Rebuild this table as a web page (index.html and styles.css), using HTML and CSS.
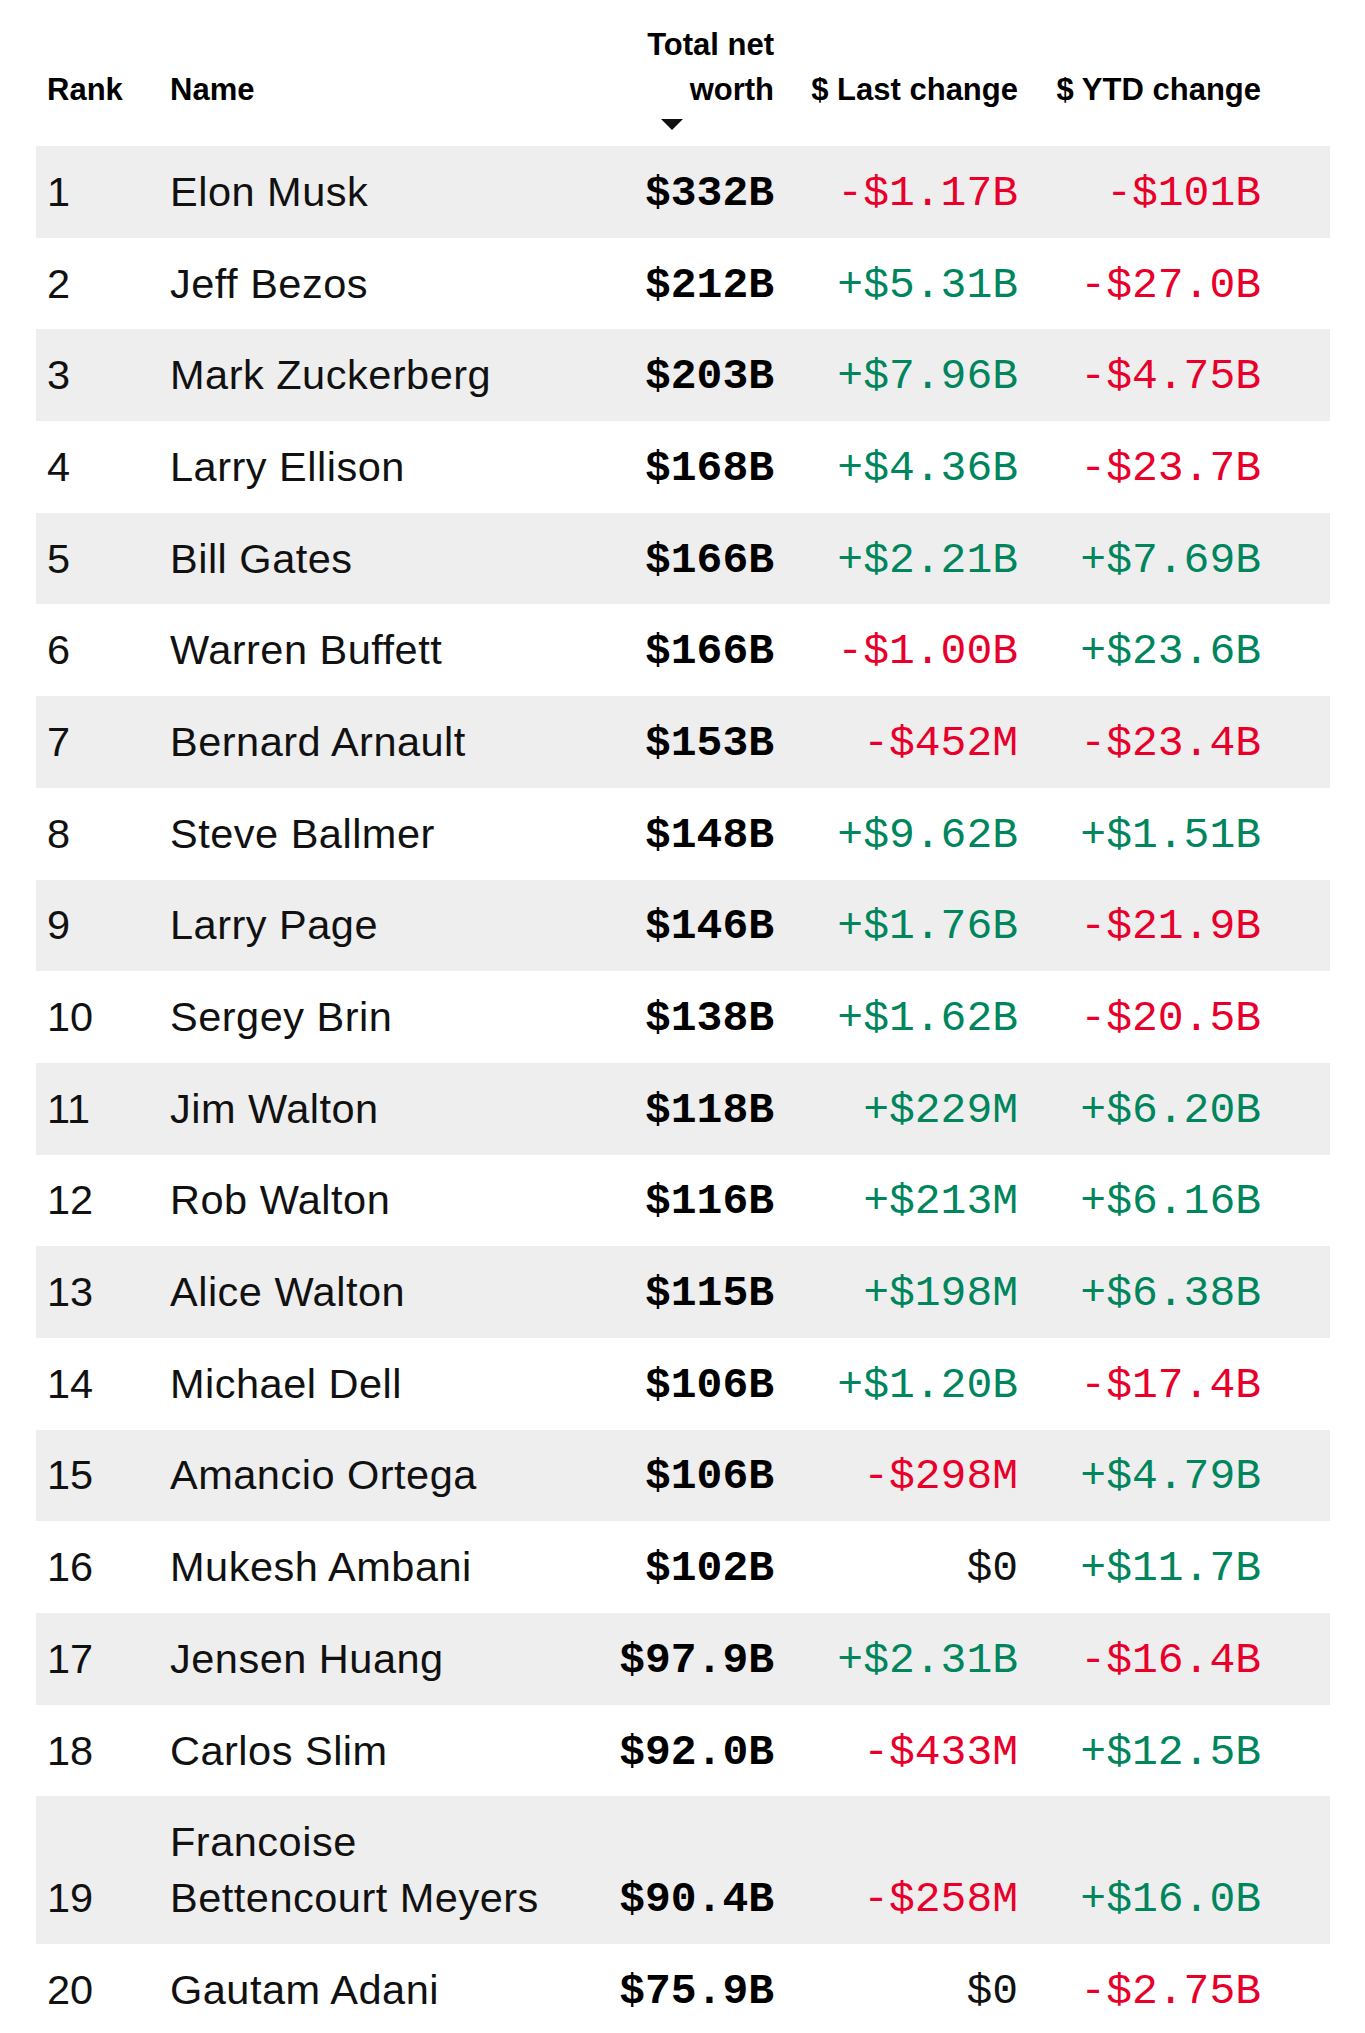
FILE: index.html
```html
<!DOCTYPE html>
<html lang="en">
<head>
<meta charset="utf-8">
<title>Billionaires</title>
<link rel="stylesheet" href="styles.css">
</head>
<body>
<div class="page">
<table class="board">
  <colgroup>
    <col class="c-rank"><col class="c-name"><col class="c-worth"><col class="c-last"><col class="c-ytd"><col class="c-fill">
  </colgroup>
  <thead>
    <tr>
      <th class="rank">Rank</th>
      <th class="name">Name</th>
      <th class="num worth-h">Total net worth<span class="sort-arrow"></span></th>
      <th class="num">$ Last change</th>
      <th class="num">$ YTD change</th>
      <th></th>
    </tr>
  </thead>
  <tbody>
    <tr><td class="rank">1</td><td class="name">Elon Musk</td><td class="worth">$332B</td><td class="chg neg">-$1.17B</td><td class="chg neg">-$101B</td><td></td></tr>
    <tr><td class="rank">2</td><td class="name">Jeff Bezos</td><td class="worth">$212B</td><td class="chg pos">+$5.31B</td><td class="chg neg">-$27.0B</td><td></td></tr>
    <tr><td class="rank">3</td><td class="name">Mark Zuckerberg</td><td class="worth">$203B</td><td class="chg pos">+$7.96B</td><td class="chg neg">-$4.75B</td><td></td></tr>
    <tr><td class="rank">4</td><td class="name">Larry Ellison</td><td class="worth">$168B</td><td class="chg pos">+$4.36B</td><td class="chg neg">-$23.7B</td><td></td></tr>
    <tr><td class="rank">5</td><td class="name">Bill Gates</td><td class="worth">$166B</td><td class="chg pos">+$2.21B</td><td class="chg pos">+$7.69B</td><td></td></tr>
    <tr><td class="rank">6</td><td class="name">Warren Buffett</td><td class="worth">$166B</td><td class="chg neg">-$1.00B</td><td class="chg pos">+$23.6B</td><td></td></tr>
    <tr><td class="rank">7</td><td class="name">Bernard Arnault</td><td class="worth">$153B</td><td class="chg neg">-$452M</td><td class="chg neg">-$23.4B</td><td></td></tr>
    <tr><td class="rank">8</td><td class="name">Steve Ballmer</td><td class="worth">$148B</td><td class="chg pos">+$9.62B</td><td class="chg pos">+$1.51B</td><td></td></tr>
    <tr><td class="rank">9</td><td class="name">Larry Page</td><td class="worth">$146B</td><td class="chg pos">+$1.76B</td><td class="chg neg">-$21.9B</td><td></td></tr>
    <tr><td class="rank">10</td><td class="name">Sergey Brin</td><td class="worth">$138B</td><td class="chg pos">+$1.62B</td><td class="chg neg">-$20.5B</td><td></td></tr>
    <tr><td class="rank">11</td><td class="name">Jim Walton</td><td class="worth">$118B</td><td class="chg pos">+$229M</td><td class="chg pos">+$6.20B</td><td></td></tr>
    <tr><td class="rank">12</td><td class="name">Rob Walton</td><td class="worth">$116B</td><td class="chg pos">+$213M</td><td class="chg pos">+$6.16B</td><td></td></tr>
    <tr><td class="rank">13</td><td class="name">Alice Walton</td><td class="worth">$115B</td><td class="chg pos">+$198M</td><td class="chg pos">+$6.38B</td><td></td></tr>
    <tr><td class="rank">14</td><td class="name">Michael Dell</td><td class="worth">$106B</td><td class="chg pos">+$1.20B</td><td class="chg neg">-$17.4B</td><td></td></tr>
    <tr><td class="rank">15</td><td class="name">Amancio Ortega</td><td class="worth">$106B</td><td class="chg neg">-$298M</td><td class="chg pos">+$4.79B</td><td></td></tr>
    <tr><td class="rank">16</td><td class="name">Mukesh Ambani</td><td class="worth">$102B</td><td class="chg">$0</td><td class="chg pos">+$11.7B</td><td></td></tr>
    <tr><td class="rank">17</td><td class="name">Jensen Huang</td><td class="worth">$97.9B</td><td class="chg pos">+$2.31B</td><td class="chg neg">-$16.4B</td><td></td></tr>
    <tr><td class="rank">18</td><td class="name">Carlos Slim</td><td class="worth">$92.0B</td><td class="chg neg">-$433M</td><td class="chg pos">+$12.5B</td><td></td></tr>
    <tr><td class="rank">19</td><td class="name">Francoise Bettencourt Meyers</td><td class="worth">$90.4B</td><td class="chg neg">-$258M</td><td class="chg pos">+$16.0B</td><td></td></tr>
    <tr><td class="rank">20</td><td class="name">Gautam Adani</td><td class="worth">$75.9B</td><td class="chg">$0</td><td class="chg neg">-$2.75B</td><td></td></tr>
  </tbody>
</table>
</div>
</body>
</html>
```
FILE: styles.css
```css
html, body {
  margin: 0;
  padding: 0;
  background: #ffffff;
}

.page {
  padding: 0 35px 0 36px;
}

.board {
  width: 1294px;
  border-collapse: collapse;
  table-layout: fixed;
  color: #111111;
  font-family: "Liberation Sans", Arial, Helvetica, sans-serif;
}

.c-rank { width: 134px; }
.c-name { width: 420px; }
.c-worth { width: 184px; }
.c-last { width: 244px; }
.c-ytd { width: 243px; }
.c-fill { width: 69px; }

.board th {
  font-weight: 700;
  font-size: 31px;
  line-height: 45px;
  letter-spacing: 0;
  text-align: left;
  vertical-align: bottom;
  padding: 22px 0 34px 0;
  color: #000;
}

.board th.num {
  text-align: right;
}

.board th.rank {
  padding-left: 11px;
}

.board td.rank {
  padding-left: 11px;
}

.worth-h {
  position: relative;
}

.sort-arrow {
  position: absolute;
  right: 91px;
  bottom: 16px;
  width: 0;
  height: 0;
  border-left: 11px solid transparent;
  border-right: 11px solid transparent;
  border-top: 11px solid #111;
}

.board td {
  font-size: 41.5px;
  line-height: 56px;
  vertical-align: bottom;
  padding: 17.85px 0;
}

.board tbody tr:nth-child(odd) td {
  background: #eeeeee;
}

.board td.name {
  letter-spacing: 0.5px;
  padding-right: 30px;
}

.board td.worth,
.board td.chg {
  font-family: "Liberation Mono", "DejaVu Sans Mono", monospace;
  font-size: 43px;
  letter-spacing: 0;
  text-align: right;
  padding-top: 19.85px;
  padding-bottom: 15.85px;
  white-space: nowrap;
}

.board td.worth {
  font-weight: 700;
  color: #000;
}

.board td.chg {
  color: #111;
}

.board td.pos {
  color: #00855d;
}

.board td.neg {
  color: #e8002b;
}
```
